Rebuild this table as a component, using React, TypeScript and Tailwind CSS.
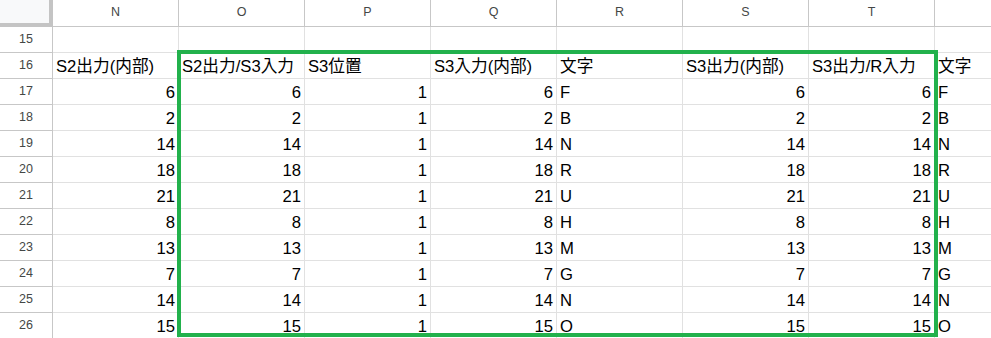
const COLS = ["N", "O", "P", "Q", "R", "S", "T", ""];

const HEADINGS = [
  "S2出力(内部)",
  "S2出力/S3入力",
  "S3位置",
  "S3入力(内部)",
  "文字",
  "S3出力(内部)",
  "S3出力/R入力",
  "文字",
];

const VALUES = [6, 2, 14, 18, 21, 8, 13, 7, 14, 15];

// 1 -> A, 2 -> B, ...
const toLetter = (n: number) => String.fromCharCode(64 + n);

type Cell = { text: string | number; align: "left" | "right" };

function buildRow(v: number): Cell[] {
  const ch = toLetter(v);
  return [
    { text: v, align: "right" },
    { text: v, align: "right" },
    { text: 1, align: "right" },
    { text: v, align: "right" },
    { text: ch, align: "left" },
    { text: v, align: "right" },
    { text: v, align: "right" },
    { text: ch, align: "left" },
  ];
}

const font = "font-['Liberation_Sans','Noto_Sans_CJK_JP',Arial,sans-serif]";

function RowNumber({ n }: { n: number | null }) {
  return (
    <div className="w-[53px] h-full shrink-0 flex items-center justify-center border-r border-b border-[#c7c7c7] text-[12.5px] text-[#444746] bg-white">
      {n}
    </div>
  );
}

function DataCell({ cell }: { cell: Cell | null }) {
  return (
    <div
      className={`w-[126px] h-full shrink-0 flex items-end px-[3px] pb-[2px] border-r border-b border-[#e1e1e1] text-[16.67px] leading-[19px] text-black whitespace-nowrap overflow-visible ${
        cell?.align === "right" ? "justify-end" : "justify-start"
      }`}
    >
      {cell?.text}
    </div>
  );
}

export default function App() {
  const rows: { n: number; cells: (Cell | null)[] }[] = [
    { n: 15, cells: COLS.map(() => null) },
    { n: 16, cells: HEADINGS.map((h) => ({ text: h, align: "left" as const })) },
    ...VALUES.map((v, i) => ({ n: 17 + i, cells: buildRow(v) })),
  ];

  return (
    <div className={`relative w-[991px] h-[338px] overflow-hidden bg-white ${font}`}>
      {/* column headers */}
      <div className="flex h-[27px]">
        <div className="w-[53px] h-full shrink-0 bg-[#f8f9fa] border-r-[4px] border-b-[4px] border-[#c4c4c4]" />
        {COLS.map((c, i) => (
          <div
            key={i}
            className="w-[126px] h-full shrink-0 flex items-center justify-center pb-[2px] border-r border-b border-[#c7c7c7] text-[12.5px] text-[#444746] bg-white"
          >
            {c}
          </div>
        ))}
      </div>

      {rows.map((r) => (
        <div key={r.n} className="flex h-[26px]">
          <RowNumber n={r.n} />
          {r.cells.map((cell, i) => (
            <DataCell key={i} cell={cell} />
          ))}
        </div>
      ))}

      {/* range outline */}
      <div className="absolute left-[177px] top-[50px] w-[761px] h-[287px] border-[4px] border-[#22b14c] pointer-events-none" />
    </div>
  );
}
